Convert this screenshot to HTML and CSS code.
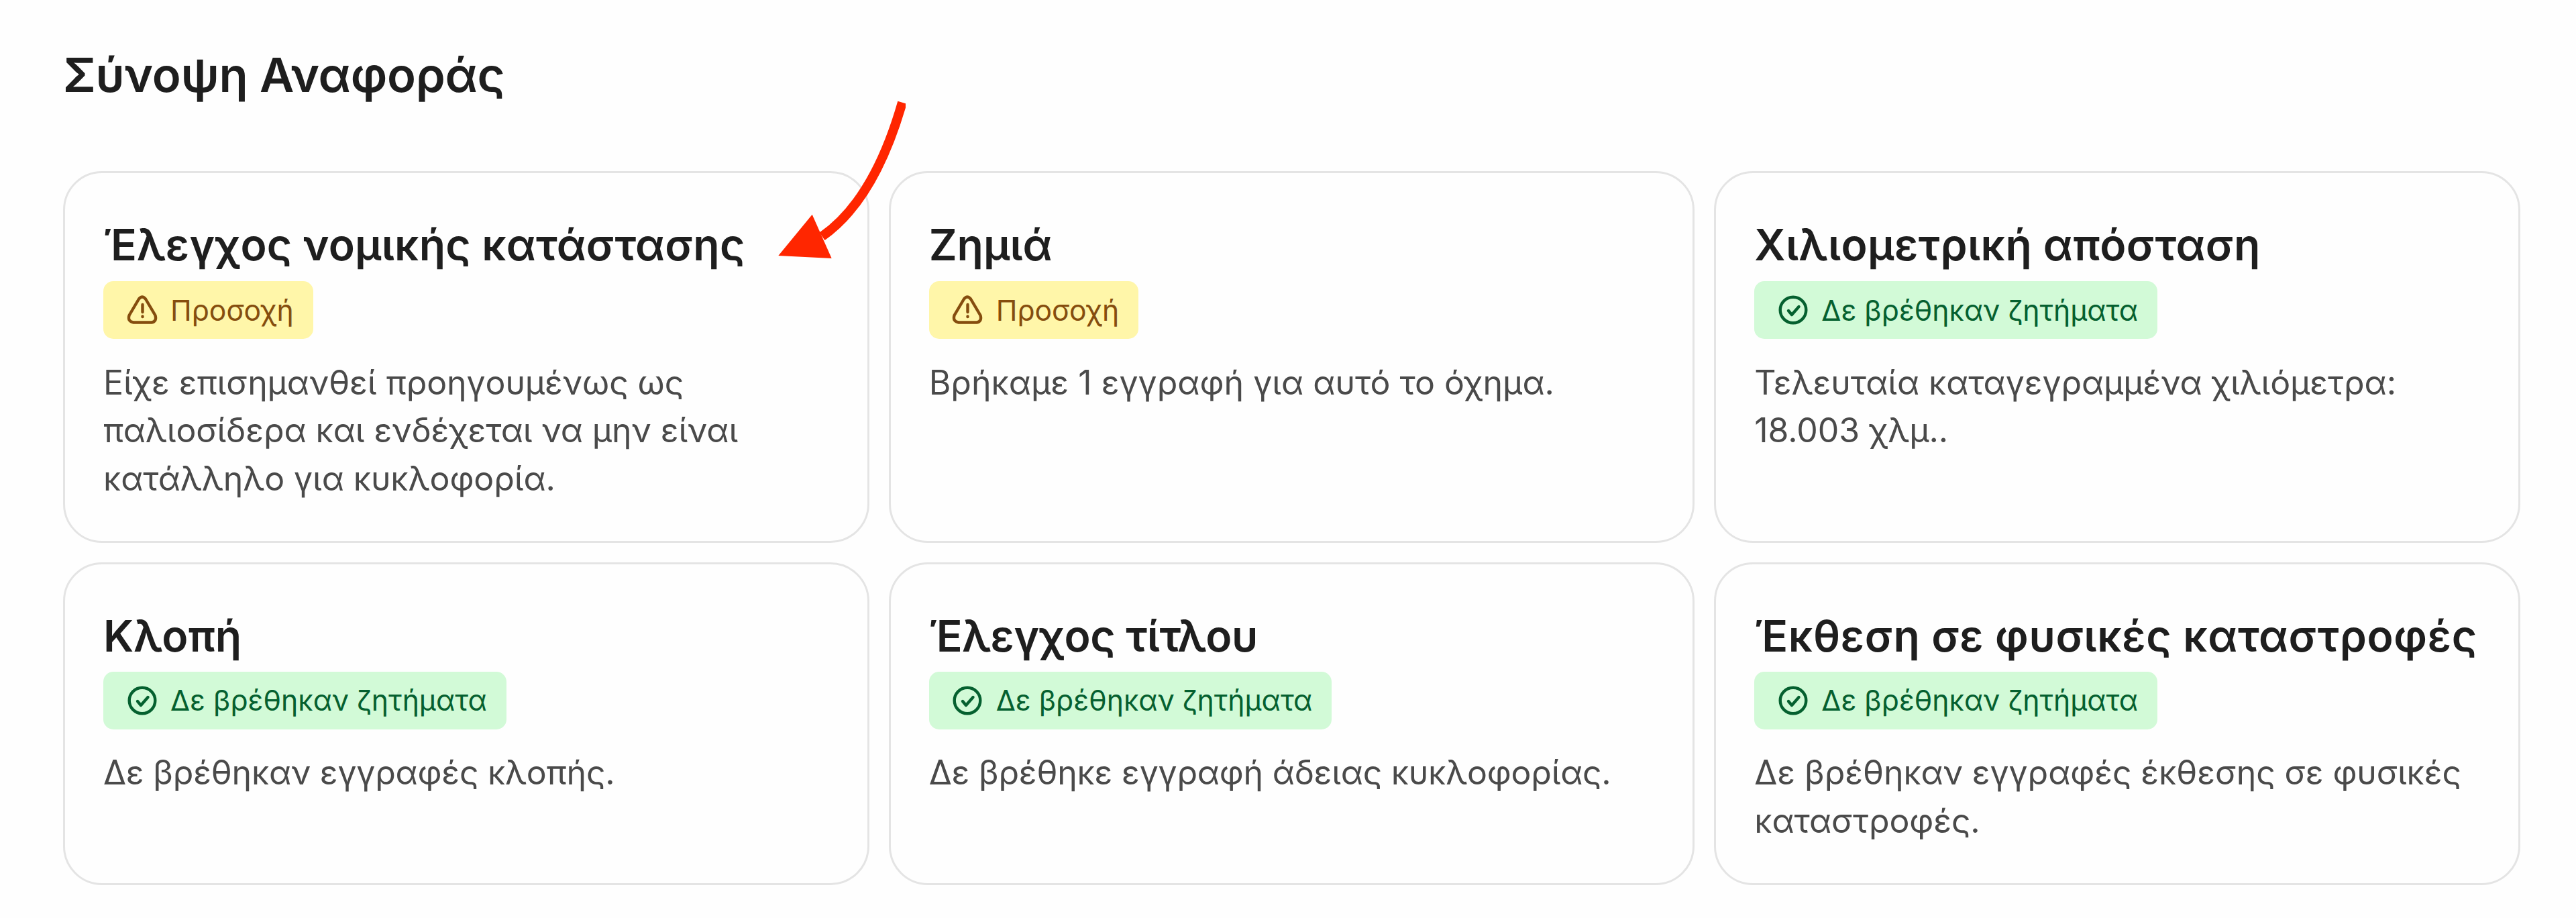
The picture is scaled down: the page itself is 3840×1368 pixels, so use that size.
FILE: index.html
```html
<!DOCTYPE html>
<html lang="el">
<head>
  <meta charset="UTF-8">
  <title>Σύνοψη Αναφοράς</title>
  <link rel="stylesheet" href="styles.css">
</head>
<body>
  <svg class="sprite">
    <symbol id="warning" viewBox="0 0 48 48">
      <path d="M19 7.5 Q24 1.5 29 7.5 L43.5 32 Q46 41 38 42.5 H11 Q2 41 4.5 32 Z"/>
      <path class="mark" d="M24.5 16 V27 M24.5 33.5 V34"/>
    </symbol>
    <symbol id="check" viewBox="0 0 48 48">
      <circle cx="24" cy="24" r="19.3"/>
      <path d="M17 25 L22 31 L32.5 19"/>
    </symbol>
  </svg>

  <h1>Σύνοψη Αναφοράς</h1>
  <div class="cards">
    <div class="card legal">
      <h2>Έλεγχος νομικής κατάστασης</h2>
      <span class="badge warning"><svg><use href="#warning"/></svg>Προσοχή</span>
      <p>Είχε επισημανθεί προηγουμένως ως παλιοσίδερα και ενδέχεται να μην είναι κατάλληλο για κυκλοφορία.</p>
    </div>
    <div class="card damage">
      <h2>Ζημιά</h2>
      <span class="badge warning"><svg><use href="#warning"/></svg>Προσοχή</span>
      <p>Βρήκαμε 1 εγγραφή για αυτό το όχημα.</p>
    </div>
    <div class="card mileage">
      <h2>Χιλιομετρική απόσταση</h2>
      <span class="badge ok"><svg><use href="#check"/></svg>Δε βρέθηκαν ζητήματα</span>
      <p>Τελευταία καταγεγραμμένα χιλιόμετρα: 18.003 χλμ..</p>
    </div>
    <div class="card theft">
      <h2>Κλοπή</h2>
      <span class="badge ok"><svg><use href="#check"/></svg>Δε βρέθηκαν ζητήματα</span>
      <p>Δε βρέθηκαν εγγραφές κλοπής.</p>
    </div>
    <div class="card title">
      <h2>Έλεγχος τίτλου</h2>
      <span class="badge ok"><svg><use href="#check"/></svg>Δε βρέθηκαν ζητήματα</span>
      <p>Δε βρέθηκε εγγραφή άδειας κυκλοφορίας.</p>
    </div>
    <div class="card disaster">
      <h2>Έκθεση σε φυσικές καταστροφές</h2>
      <span class="badge ok"><svg><use href="#check"/></svg>Δε βρέθηκαν ζητήματα</span>
      <p>Δε βρέθηκαν εγγραφές έκθεσης σε φυσικές καταστροφές.</p>
    </div>
  </div>

  <svg class="arrow" viewBox="0 0 200 240">
    <path class="tail" d="M195 2.7 Q153.3 148 75.5 202.3"/>
    <path class="head" d="M10.3 231 L60.7 169.7 L89.7 235 Z"/>
  </svg>
</body>
</html>
```

FILE: styles.css
```css
* {
  box-sizing: border-box;
}
body {
  margin: 0;
  padding: 70px 83px 0 94px;
  background: #fefefe;
  color: #1e1e1e;
  font-family: Inter, "Noto Sans", sans-serif;
}
h1, h2, p {
  margin: 0;
}
h1 {
  font-size: 70.6px;
  font-weight: 600;
  line-height: 84px;
  letter-spacing: -.25px;
}
.sprite {
  position: absolute;
  width: 0;
  height: 0;
}
.cards {
  display: grid;
  grid-template-columns: repeat(3, 1fr);
  grid-template-rows: 553.5px 481px;
  gap: 29px;
  margin-top: 101px;
}
.card {
  border: 3px solid #e4e4e4;
  border-radius: 58px;
  padding: 57px;
}
.card h2 {
  font-size: 64.3px;
  font-weight: 600;
  line-height: 100px;
  white-space: nowrap;
}
.card p {
  margin-top: 29.5px;
  color: #4a4a4a;
  font-size: 50px;
  line-height: 71.6px;
  letter-spacing: -.1px;
}
.legal h2 {
  letter-spacing: .19px;
}
.mileage h2 {
  letter-spacing: .39px;
}
.title h2 {
  letter-spacing: -.35px;
}
.disaster h2 {
  letter-spacing: .65px;
}
.damage p {
  letter-spacing: 0;
}
.theft p, .title p {
  letter-spacing: -.24px;
}
.theft .badge, .title .badge, .disaster .badge {
  margin-top: 3px;
}
.badge {
  display: flex;
  align-items: center;
  gap: 18.5px;
  width: max-content;
  height: 86px;
  margin-top: 4px;
  padding: 0 29px 0 33.5px;
  border-radius: 15px;
  font-size: 42.7px;
}
.badge svg {
  width: 48px;
  height: 48px;
  fill: none;
  stroke: currentColor;
  stroke-width: 4.4;
  stroke-linecap: round;
  stroke-linejoin: round;
}
.badge .mark {
  stroke-width: 3.6;
}
.warning {
  background: #fff6a9;
  color: #854d0e;
}
.ok {
  background: #d2fad7;
  color: #05602f;
}
.arrow {
  position: absolute;
  left: 1150px;
  top: 150px;
  width: 200px;
  height: 240px;
}
.tail {
  fill: none;
  stroke: #ff2600;
  stroke-width: 14;
}
.head {
  fill: #ff2600;
}
```
